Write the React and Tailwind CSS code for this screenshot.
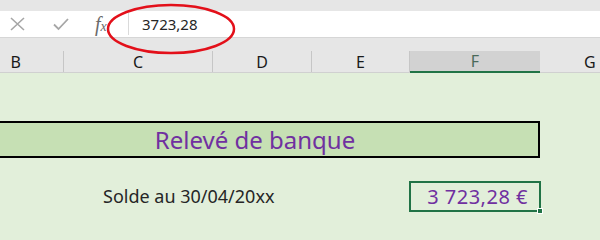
export default function App() {
  const font = { fontFamily: '"Noto Sans", "Open Sans", Arial, sans-serif' };
  return (
    <div className="relative w-[600px] h-[240px] overflow-hidden bg-[#e2efda]" style={font}>
      <div className="h-[11px] bg-[#e6e6e6]" />
      <div className="h-[27px] bg-white flex items-center border-b border-[#d6d6d6]">
        <div className="w-[128px] h-full flex items-center">
          <svg className="ml-[10px]" width="15" height="14" viewBox="0 0 15 14">
            <path d="M1 1 L14 13 M14 1 L1 13" stroke="#a6a6a6" strokeWidth="1.6" fill="none" />
          </svg>
          <svg className="ml-[28px]" width="16" height="14" viewBox="0 0 16 14">
            <path d="M1 7.5 L5.5 12 L15 2" stroke="#a6a6a6" strokeWidth="1.8" fill="none" />
          </svg>
          <span className="ml-[26px] text-[20px] italic text-[#6b6b6b] leading-none" style={{ fontFamily: '"Liberation Serif", serif' }}>
            f<span className="text-[14px]">x</span>
          </span>
        </div>
        <div className="w-px h-[22px] bg-[#dadada]" />
        <div className="pl-[13px] text-[15px] text-[#262626]">3723,28</div>
      </div>
      <div className="h-[12px] bg-[#e6e6e6]" />
      <div className="h-[23px] bg-[#e6e6e6] flex text-[16px] text-[#1a1a1a] border-b border-[#d0d0d0]">
        <div className="w-[64px] pr-[42px] flex items-center justify-end border-r border-[#c6c6c6] mt-[1px]">B</div>
        <div className="w-[149px] flex items-center justify-center border-r border-[#c6c6c6] mt-[1px]">C</div>
        <div className="w-[99px] flex items-center justify-center border-r border-[#c6c6c6] mt-[1px]">D</div>
        <div className="w-[98px] flex items-center justify-center border-r border-[#c6c6c6] mt-[1px]">E</div>
        <div className="w-[130px] flex items-center justify-center bg-[#d2d2d2] border-b-2 border-[#217346] text-[#4a6a5a] mt-[1px] mb-[-1px]">F</div>
        <div className="flex-1 flex items-center pl-[44px] mt-[1px]">G</div>
      </div>
      <div className="h-[48px]" />
      <div className="w-[550px] ml-[-10px] h-[37px] bg-[#c6e0b4] border-2 border-black flex items-center justify-center pr-[20px]">
        <span className="text-[24px] text-[#7030a0]">Relevé de banque</span>
      </div>
      <div className="h-[23px]" />
      <div className="flex items-center h-[31px]">
        <div className="w-[409px] pl-[103px] text-[18px] text-[#262626]">Solde au 30/04/20xx</div>
        <div className="relative w-[132px] h-[31px] border-2 border-[#217346] flex items-center justify-end pr-[11px]">
          <span className="text-[20px] text-[#7030a0] tracking-[0.5px]">3 723,28 €</span>
          <div className="absolute right-[-4px] bottom-[-4px] w-[6px] h-[6px] bg-[#217346] border border-white" />
        </div>
      </div>
      <svg className="absolute left-[106px] top-[3px]" width="132" height="52" viewBox="0 0 132 52">
        <ellipse cx="65" cy="26" rx="63" ry="24" stroke="#e3101a" strokeWidth="2.5" fill="none" />
      </svg>
    </div>
  );
}
